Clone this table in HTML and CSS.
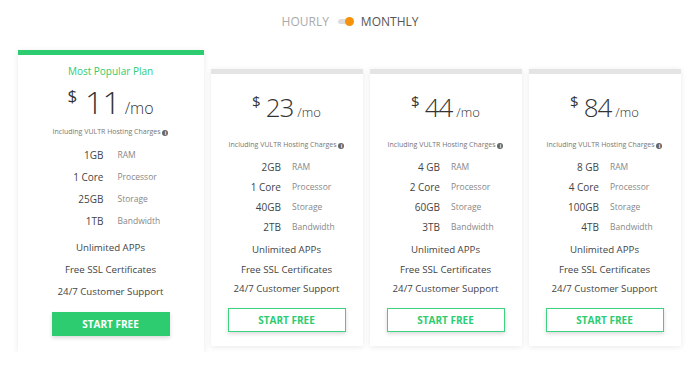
FILE: index.html
```html
<!DOCTYPE html>
<html lang="en">
<head>
    <meta charset="UTF-8">
    <meta name="viewport" content="width=device-width, initial-scale=1.0">
    <title>Pricing</title>
    <link rel="stylesheet" href="styles.css">
</head>
<body>
    <div class="switch-row">
        <span class="switch-label">HOURLY</span>
        <span class="switch"><span class="switch-knob"></span></span>
        <span class="switch-label active">MONTHLY</span>
    </div>

    <div class="plans">
        <div class="plan popular">
            <div class="plan-bar"></div>
            <div class="plan-tag">Most Popular Plan</div>
            <div class="price"><span class="currency">$</span><span class="amount">11</span><span class="period">/mo</span></div>
            <div class="note">Including VULTR Hosting Charges <span class="info">i</span></div>
            <div class="specs">
                <span class="spec-value">1GB</span><span class="spec-name">RAM</span>
                <span class="spec-value">1 Core</span><span class="spec-name">Processor</span>
                <span class="spec-value">25GB</span><span class="spec-name">Storage</span>
                <span class="spec-value">1TB</span><span class="spec-name">Bandwidth</span>
            </div>
            <ul class="features">
                <li>Unlimited APPs</li>
                <li>Free SSL Certificates</li>
                <li>24/7 Customer Support</li>
            </ul>
            <a href="#" class="start-button">START FREE</a>
        </div>

        <div class="plan">
            <div class="plan-bar"></div>
            <div class="price"><span class="currency">$</span><span class="amount">23</span><span class="period">/mo</span></div>
            <div class="note">Including VULTR Hosting Charges <span class="info">i</span></div>
            <div class="specs">
                <span class="spec-value">2GB</span><span class="spec-name">RAM</span>
                <span class="spec-value">1 Core</span><span class="spec-name">Processor</span>
                <span class="spec-value">40GB</span><span class="spec-name">Storage</span>
                <span class="spec-value">2TB</span><span class="spec-name">Bandwidth</span>
            </div>
            <ul class="features">
                <li>Unlimited APPs</li>
                <li>Free SSL Certificates</li>
                <li>24/7 Customer Support</li>
            </ul>
            <a href="#" class="start-button">START FREE</a>
        </div>

        <div class="plan">
            <div class="plan-bar"></div>
            <div class="price"><span class="currency">$</span><span class="amount">44</span><span class="period">/mo</span></div>
            <div class="note">Including VULTR Hosting Charges <span class="info">i</span></div>
            <div class="specs">
                <span class="spec-value">4 GB</span><span class="spec-name">RAM</span>
                <span class="spec-value">2 Core</span><span class="spec-name">Processor</span>
                <span class="spec-value">60GB</span><span class="spec-name">Storage</span>
                <span class="spec-value">3TB</span><span class="spec-name">Bandwidth</span>
            </div>
            <ul class="features">
                <li>Unlimited APPs</li>
                <li>Free SSL Certificates</li>
                <li>24/7 Customer Support</li>
            </ul>
            <a href="#" class="start-button">START FREE</a>
        </div>

        <div class="plan">
            <div class="plan-bar"></div>
            <div class="price"><span class="currency">$</span><span class="amount">84</span><span class="period">/mo</span></div>
            <div class="note">Including VULTR Hosting Charges <span class="info">i</span></div>
            <div class="specs">
                <span class="spec-value">8 GB</span><span class="spec-name">RAM</span>
                <span class="spec-value">4 Core</span><span class="spec-name">Processor</span>
                <span class="spec-value">100GB</span><span class="spec-name">Storage</span>
                <span class="spec-value">4TB</span><span class="spec-name">Bandwidth</span>
            </div>
            <ul class="features">
                <li>Unlimited APPs</li>
                <li>Free SSL Certificates</li>
                <li>24/7 Customer Support</li>
            </ul>
            <a href="#" class="start-button">START FREE</a>
        </div>
    </div>
</body>
</html>
```

FILE: styles.css
```css
body {
    font-family: "Open Sans", "DejaVu Sans", sans-serif;
    margin: 0;
    background-color: white;
    color: #444;
}
.switch-row {
    display: flex;
    justify-content: center;
    align-items: center;
    gap: 9px;
    height: 42px;
}
.switch-label {
    font-size: 12px;
    color: #aaa;
}
.switch-label.active {
    color: #555;
}
.switch {
    position: relative;
    width: 14px;
    height: 5px;
    border-radius: 3px;
    background-color: #ddd;
}
.switch-knob {
    position: absolute;
    right: -2px;
    top: -2px;
    width: 9px;
    height: 9px;
    border-radius: 50%;
    background-color: #f7900a;
}
.plans {
    display: flex;
    justify-content: center;
    align-items: flex-start;
    gap: 7px;
    margin-top: 8px;
    padding-right: 2px;
}
.plan {
    width: 152px;
    box-shadow: 0 1px 6px rgba(0, 0, 0, 0.09);
    text-align: center;
    margin-top: 19px;
    padding-bottom: 14px;
}
.plan-bar {
    height: 5px;
    background-color: #e4e4e4;
}
.plan-tag {
    font-size: 10px;
    line-height: 16px;
    color: #2ecc71;
    margin-top: 8px;
}
.price {
    display: flex;
    justify-content: center;
    align-items: baseline;
    color: #333;
    line-height: 32px;
    margin-top: 17px;
}
.currency {
    font-size: 15px;
    align-self: flex-start;
    line-height: 20px;
    margin-right: 5px;
}
.amount {
    font-size: 26px;
    font-weight: 300;
    letter-spacing: -1px;
}
.period {
    font-size: 13px;
    margin-left: 4px;
    font-weight: 300;
}
.note {
    font-size: 7px;
    line-height: 14px;
    color: #777;
    margin-top: 10px;
}
.info {
    display: inline-block;
    width: 6px;
    height: 6px;
    border-radius: 50%;
    background-color: #666;
    color: white;
    font-size: 5px;
    font-weight: bold;
    line-height: 6px;
    vertical-align: -0.5px;
}
.specs {
    display: grid;
    grid-template-columns: 1fr 1fr;
    column-gap: 11px;
    margin-top: 5px;
    line-height: 20px;
}
.spec-value {
    font-size: 10px;
    text-align: right;
    color: #444;
}
.spec-name {
    font-size: 8.5px;
    text-align: left;
    color: #888;
}
.features {
    list-style: none;
    margin: 3px 0 0;
    padding: 0;
    font-size: 9.7px;
    line-height: 19.5px;
    color: #444;
}
.start-button {
    display: block;
    width: 116px;
    height: 22px;
    margin: 9px auto 0;
    border: 1px solid #3dd27f;
    box-shadow: 0 2px 4px rgba(0, 0, 0, 0.15);
    color: #2ecc71;
    font-size: 10px;
    font-weight: bold;
    line-height: 22px;
    text-decoration: none;
}
.popular {
    width: 186px;
    margin-top: 0;
    padding-bottom: 16px;
}
.popular .plan-bar {
    background-color: #2ecc71;
}
.popular .price {
    line-height: 31px;
    margin-top: 7px;
}
.popular .currency {
    font-size: 17px;
    line-height: 20px;
    margin-right: 8px;
}
.popular .amount {
    font-size: 32px;
    letter-spacing: -1px;
}
.popular .period {
    font-size: 16px;
    margin-left: 5px;
}
.popular .note {
    margin-top: 1px;
}
.popular .specs {
    margin-top: 5px;
    line-height: 22px;
    column-gap: 14px;
}
.popular .features {
    margin-top: 5px;
    line-height: 22px;
}
.popular .start-button {
    background-color: #2ecc71;
    color: white;
    height: 24px;
    line-height: 24px;
    border: none;
    width: 118px;
}
```
